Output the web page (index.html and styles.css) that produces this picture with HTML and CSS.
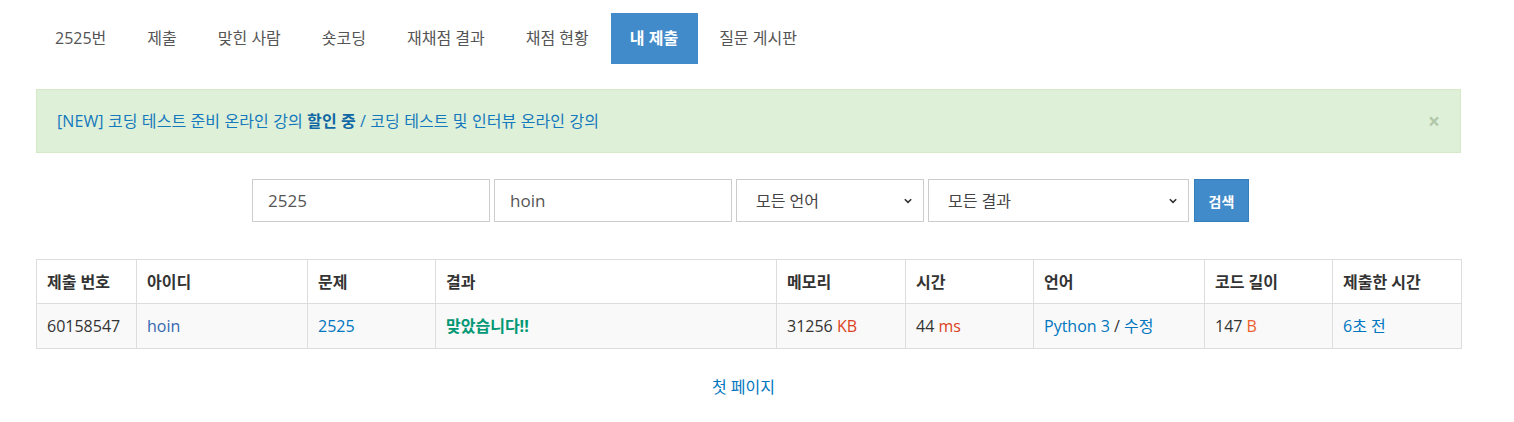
FILE: index.html
```html
<!DOCTYPE html>
<html lang="ko">
<head>
<meta charset="utf-8">
<title>내 제출</title>
<link rel="stylesheet" href="styles.css">
</head>
<body>
<div class="container">
  <ul class="nav-pills">
    <li><a href="#">2525번</a></li>
    <li><a href="#">제출</a></li>
    <li><a href="#">맞힌 사람</a></li>
    <li><a href="#">숏코딩</a></li>
    <li><a href="#">재채점 결과</a></li>
    <li><a href="#">채점 현황</a></li>
    <li class="active"><a href="#">내 제출</a></li>
    <li><a href="#">질문 게시판</a></li>
  </ul>

  <div class="alert">
    <a href="#" class="alert-link">[NEW] 코딩 테스트 준비 온라인 강의 <b>할인 중</b> / 코딩 테스트 및 인터뷰 온라인 강의</a>
    <span class="close">×</span>
  </div>

  <form class="search-form">
    <div class="field field-problem">2525</div>
    <div class="field field-user">hoin</div>
    <div class="field select select-lang"><span>모든 언어</span>
      <svg width="8" height="6" viewBox="0 0 8 6"><path d="M0.8 1.2 L4 4.4 L7.2 1.2" fill="none" stroke="#333" stroke-width="1.6"/></svg>
    </div>
    <div class="field select select-result"><span>모든 결과</span>
      <svg width="8" height="6" viewBox="0 0 8 6"><path d="M0.8 1.2 L4 4.4 L7.2 1.2" fill="none" stroke="#333" stroke-width="1.6"/></svg>
    </div>
    <button type="button" class="btn">검색</button>
  </form>

  <table class="status-table">
    <colgroup>
      <col class="c1"><col class="c2"><col class="c3"><col class="c4"><col class="c5"><col class="c6"><col class="c7"><col class="c8"><col class="c9">
    </colgroup>
    <thead>
      <tr>
        <th>제출 번호</th><th>아이디</th><th>문제</th><th>결과</th><th>메모리</th><th>시간</th><th>언어</th><th>코드 길이</th><th>제출한 시간</th>
      </tr>
    </thead>
    <tbody>
      <tr>
        <td>60158547</td>
        <td><a href="#" class="user">hoin</a></td>
        <td><a href="#" class="link">2525</a></td>
        <td><span class="ac">맞았습니다!!</span></td>
        <td>31256 <span class="unit">KB</span></td>
        <td>44 <span class="unit">ms</span></td>
        <td><a href="#" class="link">Python 3</a> / <a href="#" class="link">수정</a></td>
        <td>147 <span class="unit-b">B</span></td>
        <td><a href="#" class="link">6초 전</a></td>
      </tr>
    </tbody>
  </table>

  <div class="pager"><a href="#" class="link">첫 페이지</a></div>
</div>
</body>
</html>
```

FILE: styles.css
```css
* { box-sizing: border-box; }
html, body { margin: 0; padding: 0; background: #fff; }
body {
  font-family: "Open Sans", "Noto Sans CJK KR", sans-serif;
  font-size: 16px;
  line-height: 20px;
  color: #333;
}
a { text-decoration: none; color: #0076c0; }

.container {
  width: 1425px;
  margin-left: 36px;
  padding-top: 13px;
}

.nav-pills {
  list-style: none;
  margin: 0;
  padding: 0;
  display: flex;
}
.nav-pills li { margin-left: 2px; }
.nav-pills li:first-child { margin-left: 0; }
.nav-pills a {
  display: block;
  height: 51px;
  padding: 0 20px 0 19px;
  line-height: 51px;
  font-size: 16px;
  color: #555;
}
.nav-pills li.active a {
  background: #428bca;
  color: #fff;
  font-weight: 700;
}

.alert {
  margin-top: 25px;
  height: 64px;
  padding: 0 20px;
  background: #dff0d8;
  border: 1px solid #d6e9c6;
  display: flex;
  align-items: center;
  justify-content: space-between;
}
.alert-link { color: #1479bd; letter-spacing: 0.1px; }
.alert-link b { font-weight: 700; color: #0f67a3; }
.close {
  font-size: 21px;
  font-weight: 700;
  color: #b2c8ab;
  line-height: 20px;
}

.search-form {
  margin-top: 26px;
  display: flex;
  justify-content: center;
  gap: 4px;
  padding-left: 4px;
}
.field {
  height: 43px;
  border: 1px solid #ccc;
  background: #fff;
  padding: 0 15px;
  display: flex;
  align-items: center;
  font-size: 17px;
  color: #555;
}
.field-problem { width: 238px; }
.field-user { width: 238px; }
.select {
  justify-content: space-between;
  padding: 0 11px 0 19px;
  font-size: 16px;
  color: #444;
}
.select-lang { width: 188px; }
.select-result { width: 261px; }
.btn {
  margin-left: 1px;
  width: 55px;
  height: 43px;
  border: 1px solid #357ebd;
  background: #428bca;
  color: #fff;
  font-family: inherit;
  font-size: 14px;
  font-weight: 700;
  padding: 0;
}

.status-table {
  margin-top: 37px;
  width: 1425px;
  border-collapse: collapse;
  table-layout: fixed;
}
.c1 { width: 100px; }
.c2 { width: 171px; }
.c3 { width: 128px; }
.c4 { width: 341px; }
.c5 { width: 129px; }
.c6 { width: 128px; }
.c7 { width: 171px; }
.c8 { width: 128px; }
.c9 { width: 129px; }
.status-table th, .status-table td {
  border: 1px solid #ddd;
  padding: 0 10px;
  text-align: left;
  white-space: nowrap;
}
.status-table th {
  height: 44px;
  font-weight: 700;
  color: #333;
}
.status-table td {
  height: 45px;
  background: #f9f9f9;
}
.user { color: #3567b0; }
.link { color: #0076c0; }
.ac { color: #009874; font-weight: 700; }
.unit { color: #dd4124; }
.unit-b { color: #ec5f2f; }

.pager {
  margin-top: 28px;
  text-align: center;
  padding-right: 10px;
}
```
